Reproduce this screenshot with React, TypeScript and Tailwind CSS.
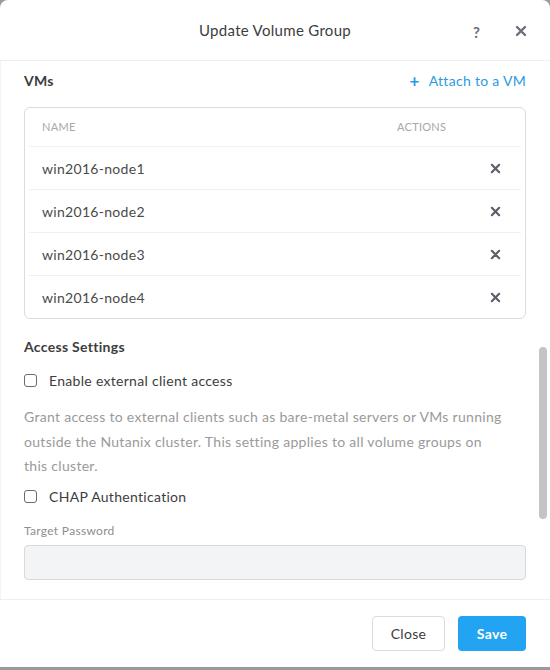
const vms = ["win2016-node1", "win2016-node2", "win2016-node3", "win2016-node4"];

const XIcon = ({ size = 12 }: { size?: number }) => (
  <svg width={size} height={size} viewBox="0 0 12 12" fill="none">
    <path d="M2 2L10 10M10 2L2 10" stroke="currentColor" strokeWidth="2.4" strokeLinecap="round" />
  </svg>
);

const Checkbox = () => (
  <span className="inline-block w-[13px] h-[13px] rounded-[3px] border border-[#6b6b6b] bg-white" />
);

export default function App() {
  return (
    <div
      className="w-[550px] h-[670px] bg-[#9a9a9a] flex flex-col tracking-[0.3px]"
      style={{ fontFamily: "Lato, 'Open Sans', sans-serif" }}
    >
      <div className="h-[667px] bg-white rounded-t-lg flex flex-col text-[#4a4a4a]">
        {/* header */}
        <div className="h-[61px] shrink-0 border-b border-[#efefef] flex items-center relative">
          <h1 className="w-full text-center text-[15px] text-[#3d3d3d]">Update Volume Group</h1>
          <span className="absolute left-[473px] top-[21px] text-[15px] font-bold text-[#6a6f78]">?</span>
          <span className="absolute left-[515px] top-[25px] text-[#6a6f78]">
            <XIcon size={12} />
          </span>
        </div>

        {/* body */}
        <div className="flex-1 relative px-[23px] pr-[24px] border-l border-[#f3f3f3]">
          <div className="flex items-center justify-between h-[38px]">
            <span className="text-[14px] font-bold text-[#3d3d3d]">VMs</span>
            <span className="flex items-center gap-[9px] text-[14px] text-[#2b9be0]">
              <span className="text-[17px] font-bold leading-none">+</span>
              Attach to a VM
            </span>
          </div>

          <div className="mt-[8px] border border-[#dcdcdc] rounded-md">
            <div className="h-[39px] mx-[4px] border-b border-[#f2f2f2] flex items-center pl-[13px] text-[11px] text-[#a8a8a8] tracking-wide">
              <span className="flex-1">NAME</span>
              <span className="w-[124px]">ACTIONS</span>
            </div>
            {vms.map((vm, i) => (
              <div
                key={vm}
                className={`mx-[4px] flex items-center pl-[13px] pr-[20px] text-[14px] text-[#4a4a4a] ${
                  i < vms.length - 1 ? "h-[43px] border-b border-[#f0f0f0]" : "h-[42px]"
                }`}
              >
                <span className="flex-1">{vm}</span>
                <span className="text-[#5b606a]">
                  <XIcon size={11} />
                </span>
              </div>
            ))}
          </div>

          <div className="mt-[17px] text-[14px] font-bold text-[#3d3d3d]">Access Settings</div>

          <label className="mt-[13px] flex items-center gap-[12px] text-[14px] text-[#3d3d3d]">
            <Checkbox />
            Enable external client access
          </label>

          <p className="mt-[14px] w-[482px] text-[14px] leading-[24.5px] text-[#9a9a9a]">
            Grant access to external clients such as bare-metal servers or VMs running outside the
            Nutanix cluster. This setting applies to all volume groups on this cluster.
          </p>

          <label className="mt-[7px] flex items-center gap-[12px] text-[14px] text-[#3d3d3d]">
            <Checkbox />
            CHAP Authentication
          </label>

          <div className="mt-[15px] text-[12px] text-[#8e8e8e]">Target Password</div>
          <div className="mt-[5px] h-[35px] rounded-[4px] border border-[#d8d8d8] bg-[#f2f4f6]" />

          {/* scrollbar thumb */}
          <div className="absolute left-[538px] top-[286px] w-[8px] h-[172px] rounded-full bg-[#c4c4c4]" />
        </div>

        {/* footer */}
        <div className="h-[68px] shrink-0 border-t border-[#efefef] flex items-center justify-end gap-[13px] pr-[24px]">
          <button className="w-[73px] h-[35px] rounded-[4px] border border-[#dcdcdc] bg-white text-[14px] text-[#3d3d3d]">
            Close
          </button>
          <button className="w-[68px] h-[35px] rounded-[4px] bg-[#22a4f2] text-[14px] font-bold text-white">
            Save
          </button>
        </div>
      </div>
    </div>
  );
}
